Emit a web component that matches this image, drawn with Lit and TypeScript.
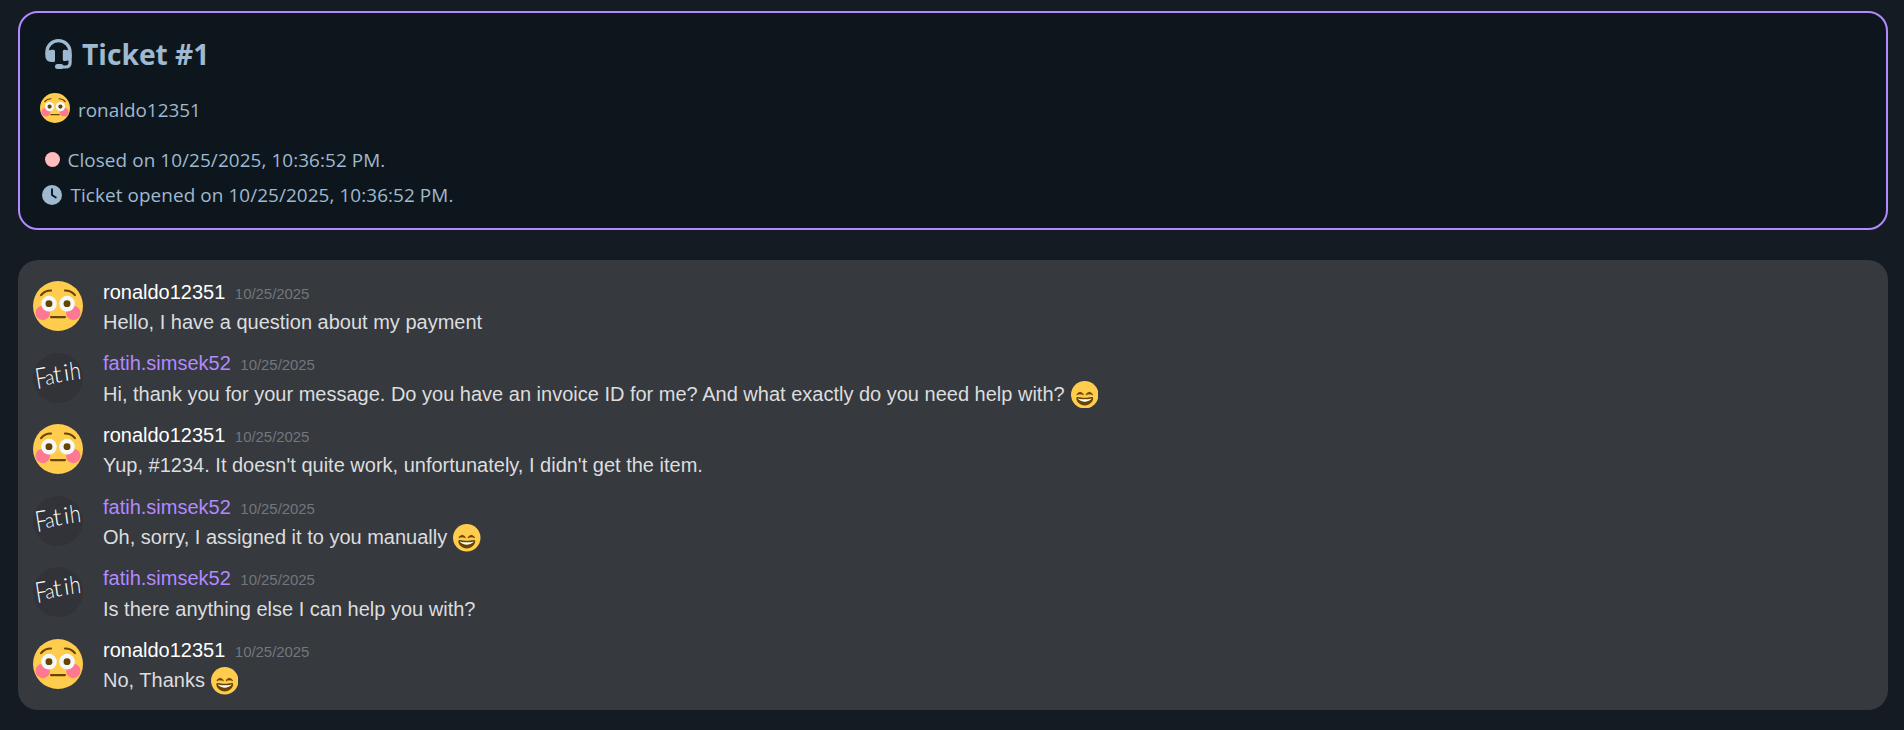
import { LitElement, html, svg, css } from "lit";
import { customElement, property } from "lit/decorators.js";

const flushed = html`<svg viewBox="0 0 36 36" width="100%" height="100%">
  <circle cx="18" cy="18" r="18" fill="#ffcc4d"/>
  <circle cx="7" cy="23" r="5.2" fill="#ff7892"/><circle cx="29" cy="23" r="5.2" fill="#ff7892"/>
  <circle cx="11.5" cy="16.3" r="5.6" fill="#f5f8fa"/><circle cx="24.5" cy="16.3" r="5.6" fill="#f5f8fa"/>
  <circle cx="11.5" cy="16.3" r="2.5" fill="#664500"/><circle cx="24.5" cy="16.3" r="2.5" fill="#664500"/>
  <path d="M5.8 10.2Q8.4 7 13 6.9M30.2 10.2Q27.6 7 23 6.9" fill="none" stroke="#664500" stroke-width="1.5" stroke-linecap="round"/>
  <path d="M13 26H23" stroke="#664500" stroke-width="1.6" stroke-linecap="round"/>
</svg>`;

const smile = html`<svg viewBox="0 0 36 36" width="100%" height="100%">
  <circle cx="18" cy="18" r="18" fill="#ffcc4d"/>
  <path d="M28.457 20.797c-.06-.135-1.499-3.297-4.457-3.297-2.957 0-4.397 3.162-4.457 3.297-.092.207-.032.449.145.591.175.142.426.147.61.014.012-.009 1.262-.902 3.702-.902 2.426 0 3.674.881 3.702.901.088.066.194.099.298.099.11 0 .221-.037.312-.109.177-.142.238-.386.145-.594zm-12 0c-.06-.135-1.499-3.297-4.457-3.297-2.957 0-4.397 3.162-4.457 3.297-.092.207-.032.449.144.591.176.142.427.147.61.014.013-.009 1.262-.902 3.703-.902 2.426 0 3.674.881 3.702.901.09.066.195.099.298.099.11 0 .221-.037.312-.109.178-.142.237-.386.145-.594z" fill="#664500" stroke="#664500" stroke-width=".3" transform="translate(0 -3)"/>
  <path d="M18 22c-3.623 0-6.027-.422-9-1-.679-.131-2 0-2 2 0 4 4.595 9 11 9 6.404 0 11-5 11-9 0-2-1.321-2.132-2-2-2.973.578-5.377 1-9 1z" fill="#664500"/>
  <path d="M9 23s3 1 9 1 9-1 9-1-2 4-9 4-9-4-9-4z" fill="#fff"/>
</svg>`;

// character, x, baseline y, rotation, font size, glyph width
const letters: [string, number, number, number, number, number][] = [
  ["F", 4, 36, -9, 29, 12], ["a", 13, 32, -10, 20, 9.5], ["t", 21, 30, -8, 24, 9], ["i", 31.5, 28, -8, 23, 6], ["h", 37.8, 27.3, -7, 25, 11],
];
const signature = html`<svg class="signature" viewBox="0 0 50 50" width="100%" height="100%">
  <circle cx="25" cy="25" r="25" fill="#313338"/>
  ${letters.map(([c, x, y, r, size, w]) => svg`<text x="${x}" y="${y}" transform="rotate(${r} ${x} ${y})"
    font-family="Lato, sans-serif" font-weight="300" font-size="${size}"
    textLength="${w}" lengthAdjust="spacingAndGlyphs" fill="#fff">${c}</text>`)}
</svg>`;

const headset = html`<svg viewBox="0 0 27 30" width="27" height="30">
  <path d="M1.9 16V13A11.6 11.3 0 0 1 25.1 13V23.5Q25.1 28 20.5 28H15" fill="none" stroke="#9fb9d0" stroke-width="3.2"/>
  <path d="M7 10.8H8.6Q10 10.8 10 12.3V21.4Q10 23 8.6 23H6.5Q.3 22.4 .3 16.9Q.3 11.4 7 10.8Z" fill="#9fb9d0"/>
  <path d="M20 10.8H19.2Q17.8 10.8 17.8 12.3V20.4Q17.8 22 19.2 22H20.5Q26.7 21.4 26.7 16.4Q26.7 11.4 20 10.8Z" fill="#9fb9d0"/>
  <rect x="10" y="25" width="8.5" height="5" rx="2.5" fill="#9fb9d0"/>
</svg>`;

const clock = html`<svg viewBox="0 0 20 20" width="20" height="20">
  <circle cx="10" cy="10" r="10" fill="#9fb9d0"/>
  <path d="M10 4.3V10L13.8 12.5" fill="none" stroke="#0e161d" stroke-width="1.9" stroke-linecap="round" stroke-linejoin="round"/>
</svg>`;

@customElement("ticket-summary")
class TicketSummary extends LitElement {
  static styles = css`
    :host { display: block; box-sizing: border-box; height: 219px; border: 2px solid #b389ff; border-radius: 20px; background: #0e161d; color: #9fb9d0; padding: 17px 20px; font: 18.9px/35px "Open Sans", sans-serif; }
    svg { display: block; }
    .title { display: flex; align-items: center; gap: 10px; height: 48px; padding-left: 5px; font-size: 28.2px; font-weight: 700; }
    .user { display: flex; align-items: flex-start; gap: 8px; margin-top: 15px; height: 35px; }
    .txt { line-height: 34px; }
    .face { width: 30px; height: 30px; }
    .line { display: flex; align-items: center; height: 35px; letter-spacing: .085px; }
    .closed { margin-top: 15px; gap: 7.5px; padding-left: 5px; }
    .opened { gap: 8.5px; padding-left: 2px; }
    .dot { width: 15px; height: 15px; margin-top: -2px; border-radius: 50%; background: #ffbbbd; }
    .opened svg { margin-top: -2px; }
  `;
  render() {
    return html`
      <div class="title">${headset}<span>Ticket #1</span></div>
      <div class="user"><span class="face">${flushed}</span><span class="txt">ronaldo12351</span></div>
      <div class="line closed"><span class="dot"></span><span>Closed on 10/25/2025, 10:36:52 PM.</span></div>
      <div class="line opened">${clock}<span>Ticket opened on 10/25/2025, 10:36:52 PM.</span></div>`;
  }
}

@customElement("chat-message")
class ChatMessage extends LitElement {
  @property() text = "";
  @property({ type: Boolean }) staff = false;
  @property({ type: Boolean }) emoji = false;
  static styles = css`
    :host { display: flex; gap: 20px; height: 71.6px; font: 20px/27.5px "Liberation Sans", Arial, sans-serif; color: #dcddde; }
    svg { display: block; }
    .signature { overflow: visible; }
    .avatar { width: 50px; height: 50px; margin-top: 3px; flex: none; }
    .head { display: flex; align-items: baseline; gap: 9.5px; height: 29.2px; padding-top: .8px; color: #fff; }
    .staff { color: #b389ff; }
    .date { font-size: 15px; letter-spacing: -.05px; color: #72767d; }
    .body { display: flex; align-items: center; gap: 6px; height: 30px; white-space: nowrap; }
    .emoji { width: 27.5px; height: 27.5px; }
  `;
  render() {
    return html`<div class="avatar">${this.staff ? signature : flushed}</div>
      <div>
        <div class="head"><span class=${this.staff ? "staff" : "user"}>${this.staff ? "fatih.simsek52" : "ronaldo12351"}</span><span class="date">10/25/2025</span></div>
        <div class="body"><span>${this.text}</span>${this.emoji ? html`<span class="emoji">${smile}</span>` : ""}</div>
      </div>`;
  }
}

const messages = [
  { staff: false, emoji: false, text: "Hello, I have a question about my payment" },
  { staff: true, emoji: true, text: "Hi, thank you for your message. Do you have an invoice ID for me? And what exactly do you need help with?" },
  { staff: false, emoji: false, text: "Yup, #1234. It doesn't quite work, unfortunately, I didn't get the item." },
  { staff: true, emoji: true, text: "Oh, sorry, I assigned it to you manually" },
  { staff: true, emoji: false, text: "Is there anything else I can help you with?" },
  { staff: false, emoji: true, text: "No, Thanks" },
];

@customElement("app-root")
class AppRoot extends LitElement {
  static styles = css`
    :host { display: block; box-sizing: border-box; height: 730px; overflow: hidden; background: #141b23; padding: 11px 16px 0 18px; }
    .chat { box-sizing: border-box; margin-top: 30px; height: 450px; border-radius: 20px; background: #36393e; padding: 18px 15px 0; }
  `;
  render() {
    return html`<ticket-summary></ticket-summary>
      <div class="chat">${messages.map((m) => html`<chat-message .text=${m.text} .staff=${m.staff} .emoji=${m.emoji}></chat-message>`)}</div>`;
  }
}
